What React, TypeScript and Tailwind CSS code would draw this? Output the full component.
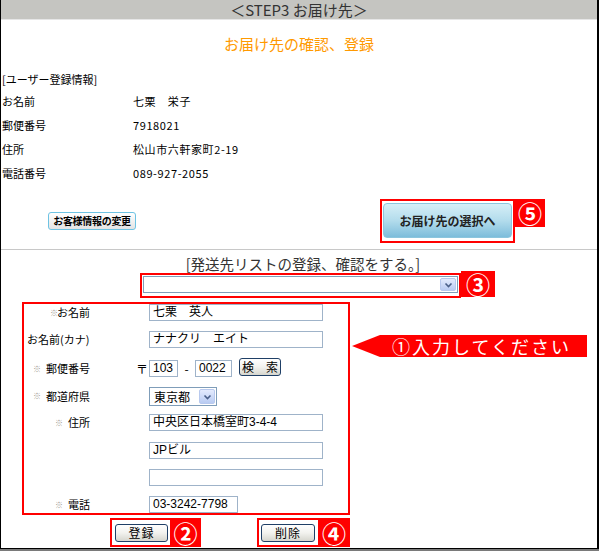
import React from 'react';

const Field: React.FC<{ w: string; children?: React.ReactNode }> = ({ w, children }) => (
  <div
    className={`${w} h-[17px] border border-[#9fb3c9] bg-white pl-[3px] text-[12px] leading-[15px] text-black font-['Liberation_Sans','Noto_Sans_CJK_JP',sans-serif] whitespace-nowrap overflow-hidden`}
  >
    {children}
  </div>
);

const XpButton: React.FC<{ w: string; children: React.ReactNode }> = ({ w, children }) => (
  <div
    className={`${w} h-[18px] rounded-[3px] border border-[#1f3f66] bg-gradient-to-b from-white via-[#f2f2ee] to-[#d6d6ce] flex items-center justify-center text-[12px] leading-none text-black`}
  >
    {children}
  </div>
);

const Badge: React.FC<{ n: string; cls: string }> = ({ n, cls }) => (
  <div className={`${cls} bg-[#ff0000] text-white flex items-center justify-center text-[24px] font-bold leading-none`}>{n}</div>
);

const Chevron: React.FC = () => (
  <svg width="9" height="6" viewBox="0 0 9 6">
    <polyline points="1.5,1.5 4.5,4.5 7.5,1.5" fill="none" stroke="#4a5f88" strokeWidth="1.6" />
  </svg>
);

const Mark: React.FC<{ w: string }> = ({ w }) => (
  <span className={`${w} text-[8px] leading-none text-[#a09a90]`}>※</span>
);

const infoRows = [
  ['お名前', '七栗　栄子'],
  ['郵便番号', '7918021'],
  ['住所', '松山市六軒家町2-19'],
  ['電話番号', '089-927-2055'],
];

const App: React.FC = () => {
  return (
    <div className="w-[599px] h-[551px] bg-white text-black font-['Noto_Sans_CJK_JP',sans-serif]">
      <div className="h-[549px] border-l border-r-2 border-b border-black flex flex-col">
        {/* top bar */}
        <div className="h-[20px] bg-[#c5c5c1] border-b border-[#e6e6e6] flex items-center justify-center text-[15px] leading-none text-[#333]">
          ＜STEP3 お届け先＞
        </div>

        <div className="h-[47px] flex items-center justify-center text-[15px] leading-none text-[#ff9900]">
          お届け先の確認、登録
        </div>

        <div className="h-[22px] pt-[3px] pl-[1px] flex items-center text-[11px] leading-none">
          [ユーザー登録情報]
        </div>

        {infoRows.map(([label, value]) => (
          <div key={label} className="h-[24px] pl-[1px] flex items-center text-[11px] leading-none">
            <div className="w-[131px]">{label}</div>
            <div className="tracking-[0.6px]">{value}</div>
          </div>
        ))}

        {/* buttons */}
        <div className="h-[64px] flex items-start">
          <div className="ml-[47px] mt-[27px] w-[88px] h-[18px] rounded-[3px] border border-[#6ec3e3] bg-gradient-to-b from-white to-[#e4e4e4] flex items-center justify-center text-[10px] font-bold leading-none tracking-[-0.3px]">
            お客様情報の変更
          </div>
          <div className="ml-[244px] mt-[14px] flex items-start">
            <div className="w-[135px] h-[44px] border-2 border-[#ff0000] bg-white pt-[2px] pl-[1px]">
              <div className="w-[129px] h-[35px] rounded-[4px] border border-[#8cc6de] bg-gradient-to-b from-[#d6eff7] via-[#b3dcec] to-[#7dbddb] flex items-center justify-center text-[12px] font-bold leading-none text-[#222]">
                お届け先の選択へ
              </div>
            </div>
            <Badge n="⑤" cls="w-[30px] h-[28px]" />
          </div>
        </div>

        <div className="h-px bg-[#c8c8c8]" />

        <div className="h-[23px] pt-[5px] pl-[8px] flex justify-center text-[14.5px] leading-[17px] text-[#333]">
          [発送先リストの登録、確認をする。]
        </div>

        {/* list select */}
        <div className="h-[25px] ml-[139px] flex items-start">
          <div className="w-[321px] h-[25px] border-2 border-[#ff0000] bg-white p-[1px]">
            <div className="h-[17px] border border-[#7f9db9] bg-white flex justify-end p-px">
              <div className="w-[16px] h-full rounded-[2px] border border-[#b8c9ee] bg-gradient-to-b from-[#e4ebfd] to-[#b9cbf2] flex items-center justify-center">
                <Chevron />
              </div>
            </div>
          </div>
          <Badge n="③" cls="w-[34px] h-[26px] -mt-[2px]" />
        </div>

        {/* form + arrow */}
        <div className="mt-[4px] ml-[21px] flex items-start">
          <div className="w-[328px] h-[213px] border-2 border-[#ff0000] flex flex-col text-[11px] leading-none">
            <div className="h-[27px] flex items-start">
              <div className="w-[125px] h-[17px] pl-[26px] flex items-center">
                <Mark w="w-[7px]" />
                お名前
              </div>
              <Field w="w-[174px]">七栗　英人</Field>
            </div>
            <div className="h-[29px] flex items-start">
              <div className="w-[125px] h-[17px] pl-[3px] flex items-center">お名前(カナ)</div>
              <Field w="w-[174px]">ナナクリ　エイト</Field>
            </div>
            <div className="h-[27px] flex items-start">
              <div className="w-[125px] h-[17px] pl-[9px] flex items-center">
                <Mark w="w-[13px]" />
                郵便番号
                <span className="ml-auto mr-[1px] text-[12px]">〒</span>
              </div>
              <Field w="w-[29px]">103</Field>
              <div className="w-[17px] h-[17px] flex items-center justify-center text-[12px]">-</div>
              <Field w="w-[37px]">0022</Field>
              <div className="ml-[7px] -mt-[2px]">
                <XpButton w="w-[42px]">検　索</XpButton>
              </div>
            </div>
            <div className="h-[27px] flex items-start">
              <div className="w-[125px] h-[18px] pl-[9px] flex items-center">
                <Mark w="w-[13px]" />
                都道府県
              </div>
              <div className="w-[68px] h-[19px] border border-[#7f9db9] bg-white flex items-center p-px">
                <div className="flex-1 pl-[3px] text-[12px] leading-none">東京都</div>
                <div className="w-[16px] h-full rounded-[2px] border border-[#b8c9ee] bg-gradient-to-b from-[#e4ebfd] to-[#b9cbf2] flex items-center justify-center">
                  <Chevron />
                </div>
              </div>
            </div>
            <div className="h-[28px] flex items-start">
              <div className="w-[125px] h-[17px] pl-[31px] flex items-center">
                <Mark w="w-[13px]" />
                住所
              </div>
              <Field w="w-[174px]">中央区日本橋室町3-4-4</Field>
            </div>
            <div className="h-[27px] flex items-start">
              <div className="w-[125px]" />
              <Field w="w-[174px]">JPビル</Field>
            </div>
            <div className="h-[27px] flex items-start">
              <div className="w-[125px]" />
              <Field w="w-[174px]" />
            </div>
            <div className="h-[17px] flex items-start">
              <div className="w-[125px] h-[17px] pl-[31px] flex items-center">
                <Mark w="w-[13px]" />
                電話
              </div>
              <Field w="w-[89px]">03-3242-7798</Field>
            </div>
          </div>

          <div className="ml-[2px] mt-[33px] w-[235px] h-[22px] bg-[#ff0000] [clip-path:polygon(0_50%,28px_0,100%_0,100%_100%,28px_100%)] flex items-center pl-[40px] text-white text-[18px] leading-none tracking-[2px]">
            ①入力してください
          </div>
        </div>

        {/* bottom buttons */}
        <div className="mt-[3px] ml-[109px] flex items-start">
          <div className="h-[29px] bg-[#ff0000] flex p-[2px] pr-0">
            <div className="w-[58px] bg-white pl-[3px] pt-[4px]">
              <XpButton w="w-[53px]">
                <span className="tracking-[1px]">登録</span>
              </XpButton>
            </div>
            <div className="w-[31px] flex items-center justify-center text-white text-[24px] font-bold leading-none">②</div>
          </div>
          <div className="ml-[56px] h-[29px] bg-[#ff0000] flex p-[2px] pr-0">
            <div className="w-[59px] bg-white pl-[2px] pt-[4px]">
              <XpButton w="w-[54px]">
                <span className="tracking-[1px]">削除</span>
              </XpButton>
            </div>
            <div className="w-[32px] flex items-center justify-center text-white text-[24px] font-bold leading-none">④</div>
          </div>
        </div>
      </div>
      <div className="h-[2px] bg-[#7a7a7a]" />
    </div>
  );
};

export default App;
